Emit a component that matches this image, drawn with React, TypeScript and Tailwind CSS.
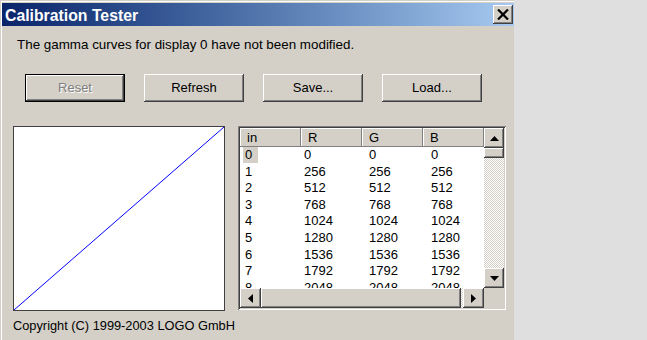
import React from "react";

const raised =
  "shadow-[inset_-1px_-1px_#404040,inset_1px_1px_#ffffff,inset_-2px_-2px_#808080,inset_2px_2px_#d4d0c8]";

const rows = [0, 1, 2, 3, 4, 5, 6, 7, 8].map((i) => [i, i * 256, i * 256, i * 256]);

function WinButton({ label, disabled, isDefault }: { label: string; disabled?: boolean; isDefault?: boolean }) {
  return (
    <div
      className={`w-[100px] h-[28px] flex items-center justify-center bg-[#d4d0c8] text-[13px] ${raised} ${
        isDefault ? "border border-black" : ""
      } ${disabled ? "text-[#808080] [text-shadow:1px_1px_0_#ffffff]" : "text-black"}`}
    >
      {label}
    </div>
  );
}

function Arrow({ dir }: { dir: "up" | "down" | "left" | "right" }) {
  const pts = {
    up: "0,5 9,5 4.5,0",
    down: "0,0 9,0 4.5,5",
    left: "5,0 5,9 0,4.5",
    right: "0,0 0,9 5,4.5",
  }[dir];
  const vertical = dir === "up" || dir === "down";
  return (
    <svg width={vertical ? 9 : 5} height={vertical ? 5 : 9} viewBox={vertical ? "0 0 9 5" : "0 0 5 9"}>
      <polygon points={pts} fill="#000" />
    </svg>
  );
}

export default function App() {
  return (
    <div className="w-[647px] h-[340px] bg-[#dfdfdf] flex overflow-hidden [font-family:'Liberation_Sans',Arial,sans-serif]">
      {/* Window */}
      <div className="w-[514px] h-full bg-[#d4d0c8] flex flex-col pl-[2px] pt-[3px] shadow-[inset_1px_1px_#d4d0c8,inset_2px_2px_#ffffff]">
        {/* Title bar */}
        <div className="h-[23px] bg-gradient-to-r from-[#0a246a] to-[#a6caf0] flex justify-between pl-[3px]">
          <span className="text-white font-bold text-[15.8px] leading-[23px] pt-[1px]">Calibration Tester</span>
          <div className={`mt-[2px] mr-[1px] w-[20px] h-[19px] bg-[#d4d0c8] flex items-center justify-center ${raised}`}>
            <svg width="12" height="11" viewBox="0 0 12 11">
              <line x1="1" y1="0.5" x2="11" y2="10.5" stroke="#000" strokeWidth="2.2" />
              <line x1="11" y1="0.5" x2="1" y2="10.5" stroke="#000" strokeWidth="2.2" />
            </svg>
          </div>
        </div>

        {/* Message */}
        <div className="mt-[11px] pl-[15px] text-[13.4px] leading-[16px] text-black">
          The gamma curves for display 0 have not been modified.
        </div>

        {/* Buttons */}
        <div className="mt-[21px] pl-[23px] flex gap-[19px]">
          <WinButton label="Reset" disabled isDefault />
          <WinButton label="Refresh" />
          <WinButton label="Save..." />
          <WinButton label="Load..." />
        </div>

        {/* Graph + table */}
        <div className="mt-[24px] pl-[11px] flex items-start gap-[13px]">
          <div className="w-[212px] h-[185px] bg-white border border-[#404040]">
            <svg width="210" height="183" viewBox="0 0 210 183" className="block">
              <line x1="0" y1="183" x2="210" y2="0" stroke="#0000ff" strokeWidth="1" />
            </svg>
          </div>

          <div className="w-[268px] h-[184px] p-[2px] bg-white shadow-[inset_1px_1px_#808080,inset_-1px_-1px_#ffffff,inset_2px_2px_#404040,inset_-2px_-2px_#d4d0c8] flex flex-col">
            <div className="h-[160px] flex">
              {/* Grid */}
              <div className="flex-1 flex flex-col overflow-hidden">
                <div className="h-[19px] grid grid-cols-[61px_61px_61px_61px] shrink-0 text-[13px] leading-[19px]">
                  {["in", "R", "G", "B"].map((h) => (
                    <div key={h} className="bg-[#d4d0c8] pl-[7px] shadow-[inset_-1px_-1px_#808080,inset_1px_1px_#ffffff]">
                      {h}
                    </div>
                  ))}
                </div>
                <div className="flex flex-col">
                  {rows.map((r) => (
                    <div key={r[0]} className="h-[16.6px] shrink-0 grid grid-cols-[60px_65px_62px_1fr] text-[13px] leading-[16.6px]">
                      <div className="pl-[3px]">
                        <span
                          className={`inline-block w-[15px] h-[16px] pl-[2px] ${r[0] === 0 ? "bg-[#d4d0c8]" : ""}`}
                        >
                          {r[0]}
                        </span>
                      </div>
                      <div className="pl-[4px]">{r[1]}</div>
                      <div className="pl-[4px]">{r[2]}</div>
                      <div className="pl-[4px]">{r[3]}</div>
                    </div>
                  ))}
                </div>
              </div>
              {/* Vertical scrollbar */}
              <div className="w-[20px] flex flex-col bg-[repeating-conic-gradient(#ffffff_0_25%,#d4d0c8_0_50%)] bg-[length:2px_2px]">
                <div className={`h-[20px] bg-[#d4d0c8] flex items-center justify-center ${raised}`}>
                  <Arrow dir="up" />
                </div>
                <div className={`h-[10px] bg-[#d4d0c8] ${raised}`} />
                <div className="flex-1" />
                <div className={`h-[20px] bg-[#d4d0c8] flex items-center justify-center ${raised}`}>
                  <Arrow dir="down" />
                </div>
              </div>
            </div>
            {/* Horizontal scrollbar */}
            <div className="h-[20px] flex bg-[#d4d0c8]">
              <div className="flex-1 flex bg-[repeating-conic-gradient(#ffffff_0_25%,#d4d0c8_0_50%)] bg-[length:2px_2px]">
                <div className={`w-[21px] bg-[#d4d0c8] flex items-center justify-center ${raised}`}>
                  <Arrow dir="left" />
                </div>
                <div className={`w-[200px] bg-[#d4d0c8] ${raised}`} />
                <div className="flex-1" />
                <div className={`w-[21px] bg-[#d4d0c8] flex items-center justify-center ${raised}`}>
                  <Arrow dir="right" />
                </div>
              </div>
              <div className="w-[20px] bg-[#d4d0c8]" />
            </div>
          </div>
        </div>

        {/* Copyright */}
        <div className="mt-[7px] pl-[11px] text-[12.8px] leading-[16px] text-black">
          Copyright (C) 1999-2003 LOGO GmbH
        </div>
      </div>
    </div>
  );
}
